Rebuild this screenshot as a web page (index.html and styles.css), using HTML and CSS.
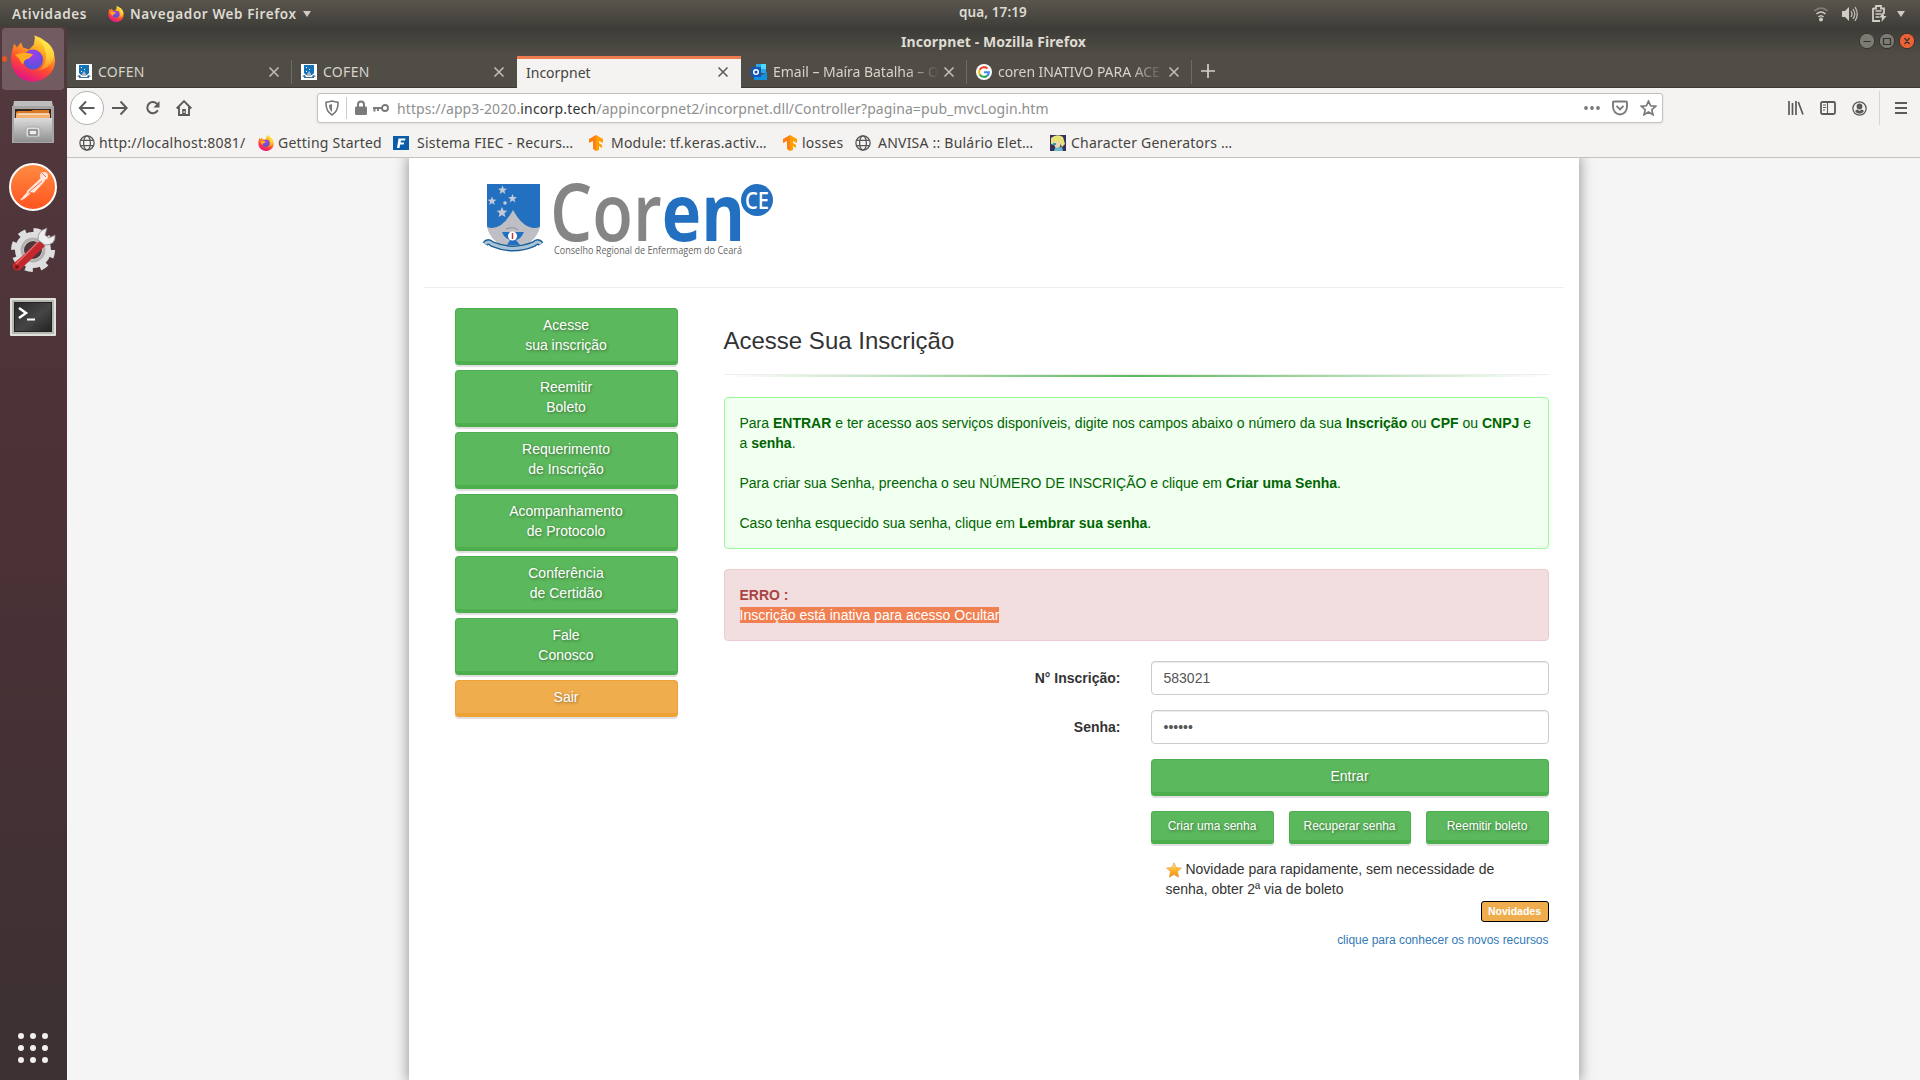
FILE: index.html
```html
<!DOCTYPE html>
<html lang="pt-BR">
<head>
<meta charset="utf-8">
<title>Incorpnet - Mozilla Firefox</title>
<link rel="stylesheet" href="styles.css">
</head>
<body>
<svg width="0" height="0" class="defs">
  <defs>
    <linearGradient id="ffBody" x1="0.8" y1="0" x2="0.35" y2="1"><stop offset="0" stop-color="#fff44f"/><stop offset=".35" stop-color="#ffa61e"/><stop offset=".65" stop-color="#ff4b2f"/><stop offset="1" stop-color="#e3108a"/></linearGradient>
    <radialGradient id="ffGlobe" cx=".5" cy=".3" r=".7"><stop offset="0" stop-color="#a63af0"/><stop offset="1" stop-color="#4a58d8"/></radialGradient>
    <linearGradient id="ffTail" x1="0" y1="0" x2="0" y2="1"><stop offset="0" stop-color="#fff44f"/><stop offset=".6" stop-color="#ffcf3a"/><stop offset="1" stop-color="#ff8a20"/></linearGradient>
    <linearGradient id="steel" x1="0" y1="0" x2="0" y2="1"><stop offset="0" stop-color="#dcdcdc"/><stop offset="1" stop-color="#909090"/></linearGradient>
    <linearGradient id="orange" x1="0" y1="0" x2="0" y2="1"><stop offset="0" stop-color="#ff8c42"/><stop offset="1" stop-color="#ff5320"/></linearGradient>
    <linearGradient id="screen" x1="0" y1="0" x2="1" y2="1"><stop offset="0" stop-color="#2a2a2a"/><stop offset=".55" stop-color="#454545"/><stop offset="1" stop-color="#222"/></linearGradient>
    <linearGradient id="starFill" x1="0" y1="0" x2="0" y2="1"><stop offset="0" stop-color="#fff0a0"/><stop offset=".5" stop-color="#fdb62a"/><stop offset="1" stop-color="#f58a0c"/></linearGradient>
    <symbol id="firefox" viewBox="0 0 46 46">
      <path d="M4 8 7 12 11 7 13 12 19 14 24 9 C24 5 26 2 24 0 C34 2 45 13 45 25 C45 37 35 46 23 46 C10 46 1 36 1 24 C1 17 3 13 4 8Z" fill="url(#ffBody)"/>
      <path d="M24 0 C31 5 34 9 35 15 C38 22 35 31 28 35 C41 32 45 24 44 17 C41 8 34 4 30 5 C28 3 27 1 24 0Z" fill="url(#ffTail)"/>
      <circle cx="23" cy="24" r="10" fill="url(#ffGlobe)"/>
      <path d="M5 20 C10 16 19 17 23 19 L19 23 C15 24 14 25 13 29 C10 27 10 22 5 20Z" fill="#ffac20"/>
    </symbol>
    <symbol id="cofen" viewBox="0 0 16 16">
      <path d="M0 0h16v16H0z" fill="#fff"/><path d="M3 1h10v8l-2 2H5L3 9z" fill="#1273b8"/><path d="M5 3h1v1H5zM8 5h1v1H8zM5 7h1v1H5z" fill="#fff"/><path d="M6 10 8 7l2 3v2H6z" fill="#a9b8c5"/><path d="M1 12l3-1 1 2h6l1-2 3 1-2 1v1H3v-1z" fill="#3b6e96"/>
    </symbol>
    <symbol id="globe" viewBox="0 0 16 16"><g fill="none" stroke="#575757" stroke-width="1.3"><circle cx="8" cy="8" r="7.1"/><ellipse cx="8" cy="8" rx="3.4" ry="7.1"/><path d="M1.5 5.3h13M1.5 10.7h13"/></g></symbol>
    <symbol id="tensor" viewBox="0 0 16 16"><path d="M8 0 15 4v4l-4-2v2l3 2v3l-3-2v4l-3 1z" fill="#ffa000"/><path d="M8 0 1 4v4l4-2v8l3 2z" fill="#ff7f10"/></symbol>
    <symbol id="close" viewBox="0 0 12 12"><path d="M1.5 1.5l9 9M10.5 1.5l-9 9" stroke="currentColor" stroke-width="1.5" fill="none"/></symbol>
  </defs>
</svg>

<header class="topbar">
  <span class="activities">Atividades</span>
  <svg class="app-icon" width="16" height="18"><use href="#firefox"/></svg>
  <span class="app-name">Navegador Web Firefox</span>
  <i class="caret"></i>
  <time class="clock">qua, 17:19</time>
  <div class="status">
    <svg width="14" height="16" viewBox="0 0 14 16" fill="none" stroke="#ccc9c2" stroke-width="1.6"><path d="M.5 5Q7-1 13.500 5" stroke="#85827a"/><path d="M2.500 8Q7 4 11.500 8M4.500 11Q7 8.500 9.500 11"/><circle cx="7" cy="13.500" r="1.200" fill="#ccc9c2"/></svg>
    <svg width="16" height="16" viewBox="0 0 16 16"><path d="M0 5h3l4-4v14l-4-4H0z" fill="#d0cdc6"/><path d="M9 5q2 3 0 6M11 3q3.500 5 0 10M13 1q4.500 7 0 14" fill="none" stroke="#bdbab2" stroke-width="1.300"/></svg>
    <svg width="15" height="17" viewBox="0 0 15 17"><path d="M1 3.500h3V1h5v2.500h3V9M8 16H1V3" fill="none" stroke="#d0cdc6" stroke-width="1.800"/><path d="M3.500 6h6M3.500 9h6M3.500 12h4" stroke="#d0cdc6" stroke-width="1.500"/><path d="M11 7 7.500 12.500H10L9.500 17 14.500 11H12z" fill="#d0cdc6"/></svg>
    <i class="caret"></i>
  </div>
</header>

<div class="desktop">
  <nav class="dock">
    <div class="dock-active"><i class="running"></i><svg width="46" height="47"><use href="#firefox"/></svg></div>
    <svg class="dock-files" width="44" height="45" viewBox="0 0 44 45"><path d="M3 1h38l2 12H1z" fill="#bdbdbd"/><path d="M1 6h42v37H1z" fill="#a5a5a5"/><path d="M4 9h36v9H4z" fill="#35251c"/><path d="M7 11h13l2-1h16v8H5v-6z" fill="#d9792a"/><path d="M5 13.500h34V18H5z" fill="#f5b070"/><path d="M7 14h31" stroke="#fff" /><path d="M3 18h38v24H3z" fill="url(#steel)"/><rect x="15" y="27" width="14" height="10" rx="2" fill="#ddd" stroke="#aaa"/><rect x="18" y="30" width="8" height="5" fill="#eee" stroke="#555"/></svg>
    <svg class="dock-postman" width="48" height="48" viewBox="0 0 48 48"><circle cx="24" cy="24" r="23" fill="url(#orange)" stroke="#fff" stroke-width="2"/><circle cx="35" cy="13" r="4" fill="#ffe6dc"/><path d="M32 16 35 18 25 29 19 28zM20 28 12 37M21 30 14 36" fill="#ffe6dc" stroke="#ffe6dc" stroke-width="1.500"/><path d="M20 29 33 18M33 10l4 4" stroke="#ff6c37"/></svg>
    <svg class="dock-tools" width="46" height="46" viewBox="0 0 46 46"><circle cx="22" cy="23" r="13.500" fill="none" stroke="#dedede" stroke-width="9"/><circle cx="22" cy="23" r="19.500" fill="none" stroke="#dedede" stroke-width="5" stroke-dasharray="7.650 7.650"/><circle cx="22" cy="23" r="11" fill="none" stroke="#b2b2b2" stroke-width="3"/><path d="M29 14 34 19 10 42Q6 45 3 42Q0 39 3 36z" fill="#c3282d"/><path d="M27 15 5 37" stroke="#e5686a" stroke-width="1.500"/><circle cx="6" cy="40" r="2" fill="#7e1216"/><path d="M27 13Q26 4 36 1L34 8l4 3 6-3Q45 18 34 18z" fill="#eee" stroke="#888" stroke-width=".8"/></svg>
    <svg class="dock-term" width="46" height="38" viewBox="0 0 46 38"><rect width="46" height="38" rx="1" fill="#e2e2dd"/><path d="M2 2h42v34H2z" fill="#b7b7b2"/><path d="M4 4h38v30H4z" fill="#222"/><path d="M5 5h36v28H5z" fill="url(#screen)"/><path d="M9 10l7 5-7 5" fill="none" stroke="#fff" stroke-width="2.500"/><path d="M17 21.500h8" stroke="#fff" stroke-width="2"/></svg>
    <div class="dock-apps"><i></i><i></i><i></i><i></i><i></i><i></i><i></i><i></i><i></i></div>
  </nav>

  <div class="window">
    <div class="titlebar">
      <b>Incorpnet - Mozilla Firefox</b>
      <div class="win-buttons">
        <svg width="56" height="18" viewBox="0 0 56 18"><g stroke="#33322e"><circle cx="8" cy="9" r="7.700" fill="#7c7a73"/><circle cx="28" cy="9" r="7.700" fill="#7c7a73"/><circle cx="48" cy="9" r="7.700" fill="#ec6237"/></g><path d="M4.500 9.500h7M24.500 6.500h7v6h-7zM45.500 6l5 6M50.500 6l-5 6" fill="none" stroke="#33322e" stroke-width="1.200"/></svg>
      </div>
    </div>

    <div class="tabs">
      <div class="tab"><svg width="16" height="16"><use href="#cofen"/></svg><span class="t-cofen">COFEN</span><svg class="x" width="12" height="12"><use href="#close"/></svg></div>
      <div class="tab no-sep"><svg width="16" height="16"><use href="#cofen"/></svg><span class="t-cofen">COFEN</span><svg class="x" width="12" height="12"><use href="#close"/></svg></div>
      <div class="tab active"><span class="t-inc">Incorpnet</span><svg class="x" width="12" height="12"><use href="#close"/></svg></div>
      <div class="tab"><svg width="16" height="16" viewBox="0 0 16 16"><path d="M5 0h10v9H5z" fill="#28a8ea"/><path d="M10 0h5v5h-5z" fill="#50d9ff"/><path d="M3 8l6 4 7-4v8H3z" fill="#1490df"/><path d="M0 3h10v10H0z" fill="#1354b8"/><circle cx="5" cy="8" r="2.300" fill="none" stroke="#fff" stroke-width="1.500"/></svg><span class="t-mail">Email – Maíra Batalha – O</span><svg class="x" width="12" height="12"><use href="#close"/></svg></div>
      <div class="tab"><svg width="16" height="16" viewBox="0 0 16 16"><circle cx="8" cy="8" r="8" fill="#fff"/><g fill="none" stroke-width="2.100"><path d="M11.500 4.600A4.900 4.900 0 0 0 3.700 5.700" stroke="#ea4335"/><path d="M3.700 5.700A4.900 4.900 0 0 0 3.800 10.500" stroke="#fbbc05"/><path d="M3.800 10.500A4.900 4.900 0 0 0 11.300 11.600" stroke="#34a853"/><path d="M11.300 11.600A4.900 4.900 0 0 0 12.900 8.200H8" stroke="#4285f4"/></g></svg><span class="t-google">coren INATIVO PARA ACE</span><svg class="x" width="12" height="12"><use href="#close"/></svg></div>
      <svg class="plus" width="14" height="14" viewBox="0 0 14 14"><path d="M7 0v14M0 7h14" stroke="#d3d0c8" stroke-width="1.700"/></svg>
    </div>

    <div class="toolbar">
      <svg class="back" width="36" height="36" viewBox="0 0 36 36"><circle cx="18" cy="18" r="16.500" fill="#fff" stroke="#b3b1af"/><path d="M11 18h14.500M17 11.500 10.800 18l6.200 6.500" fill="none" stroke="#5c5a58" stroke-width="1.900"/></svg>
      <svg class="fwd" width="16" height="16" viewBox="0 0 16 16" fill="none" stroke="#5c5a58" stroke-width="1.900"><path d="M0 8h14.500M8.500 1.500 14.700 8l-6.200 6.500"/></svg>
      <svg class="reload" width="16" height="16" viewBox="0 0 16 16"><path d="M12.300 4.200A5.600 5.600 0 1 0 12.800 10.300" fill="none" stroke="#5c5a58" stroke-width="2"/><path d="M14.500 1v6.500H8.500z" fill="#5c5a58"/></svg>
      <svg class="home" width="16" height="16" viewBox="0 0 16 16"><path d="M.7 8.500 8 1.200l7.300 7.300M3 7v8h10V7" fill="none" stroke="#5c5a58" stroke-width="1.900"/><path d="M6.200 9h3.600v6H6.200z" fill="#5c5a58"/><path d="M7.600 11h1v2h-1z" fill="#fff"/></svg>
      <div class="urlbar">
        <svg class="shield" width="14" height="16" viewBox="0 0 14 16"><path d="M7 1q3 1 6 1.300 .4 9-6 12.700-6.400-3.700-6-12.700Q4 2 7 1z" fill="none" stroke="#7a7a7a" stroke-width="1.600"/><path d="M7 4v8q-3-2.500-3-7z" fill="#7a7a7a"/></svg>
        <i class="url-sep"></i>
        <svg class="lock" width="12" height="16" viewBox="0 0 12 16"><path d="M3 8V4.500a3 3 0 0 1 6 0V8" fill="none" stroke="#7a7a7a" stroke-width="2"/><rect y="6.500" width="12" height="8.500" rx="1.200" fill="#7a7a7a"/></svg>
        <svg class="key" width="16" height="10" viewBox="0 0 16 10"><circle cx="12" cy="5" r="3" fill="none" stroke="#7a7a7a" stroke-width="1.900"/><path d="M0 5h9M1.500 5v3.500M5 5v3" stroke="#7a7a7a" stroke-width="2"/></svg>
        <span class="url">https://app3-2020.<span>incorp.tech</span>/appincorpnet2/incorpnet.dll/Controller?pagina=pub_mvcLogin.htm</span>
        <svg class="dots" width="16" height="4" viewBox="0 0 16 4" fill="#7a7a7a"><circle cx="2" cy="2" r="1.900"/><circle cx="8" cy="2" r="1.900"/><circle cx="14" cy="2" r="1.900"/></svg>
        <svg class="pocket" width="16" height="16" viewBox="0 0 16 16" fill="none" stroke="#7a7a7a" stroke-width="1.900"><path d="M2 1.500h12q1 0 1 1V7q-.5 6.500-7 7.500Q1.500 13.500 1 7V2.500q0-1 1-1z"/><path d="M4.500 5.800 8 9.300l3.500-3.500"/></svg>
        <svg class="fav" width="17" height="16" viewBox="0 0 17 16"><path d="M8.500 1l2.100 4.800 5 .5-3.800 3.400 1.200 5-4.500-2.600L4 14.700l1.200-5L1.400 6.300l5-.5z" fill="none" stroke="#7a7a7a" stroke-width="1.700"/></svg>
      </div>
      <svg class="library" width="16" height="14" viewBox="0 0 16 14"><path d="M1 0v14M4.500 2v12M8 0v14M10.300 1 15 13.500" stroke="#5c5a58" stroke-width="1.700"/></svg>
      <svg class="sidebar-icon" width="16" height="14" viewBox="0 0 16 14"><rect x="1" y="1" width="14" height="12" rx="1.500" fill="none" stroke="#5c5a58" stroke-width="1.800"/><path d="M7.500 1v12M3 4h3M3 6.500h3M3 9h2" stroke="#5c5a58" stroke-width="1.100"/></svg>
      <svg class="account" width="15" height="15" viewBox="0 0 15 15"><circle cx="7.500" cy="7.500" r="6.600" fill="none" stroke="#5c5a58" stroke-width="1.300"/><circle cx="7.500" cy="5.500" r="2.900" fill="#5c5a58"/><path d="M3 10q1-1.500 2.500-1.500l2 1.500 2-1.500Q11 8.500 12 10q-1.500 2.800-4.500 2.800T3 10z" fill="#5c5a58"/></svg>
      <i class="tool-sep"></i>
      <svg class="burger" width="12" height="12" viewBox="0 0 12 12"><path d="M0 1h12M0 6h12M0 11h12" stroke="#5c5a58" stroke-width="2"/></svg>
    </div>

    <div class="bookmarks">
      <div class="bm b1"><svg width="16" height="16"><use href="#globe"/></svg><span>http://localhost:8081/</span></div>
      <div class="bm b2"><svg width="16" height="16"><use href="#firefox"/></svg><span>Getting Started</span></div>
      <div class="bm b3"><svg width="16" height="14" viewBox="0 0 16 14"><path d="M0 0h16v14H0z" fill="#0b5ca8"/><path d="M5.500 2.500h7l-.5 2H8l-.4 2h3.600l-.5 2H7.200l-.7 3.500H4z" fill="#fff"/></svg><span>Sistema FIEC - Recurs…</span></div>
      <div class="bm b4"><svg width="16" height="16"><use href="#tensor"/></svg><span>Module: tf.keras.activ…</span></div>
      <div class="bm b5"><svg width="16" height="16"><use href="#tensor"/></svg><span>losses</span></div>
      <div class="bm b6"><svg width="16" height="16"><use href="#globe"/></svg><span>ANVISA :: Bulário Elet…</span></div>
      <div class="bm b7"><svg width="16" height="16" viewBox="0 0 16 16"><path d="M0 0h16v16H0z" fill="#38305c"/><path d="M1 3q6-5 12-1l2 7-3 3-2-4-6 2-3-1z" fill="#e8e27a"/><path d="M3 7h8l-1 5-4 2z" fill="#e9d6b4"/><path d="M3 8h3v2H3z" fill="#27a7b8"/><path d="M5 13l7-1 1 4H4z" fill="#67b9cf"/></svg><span>Character Generators …</span></div>
    </div>

    <main class="viewport">
      <div class="page">
        <header class="brand">
          <svg width="300" height="82" viewBox="0 0 300 82">
            <path d="M10 6h53v42q-6 18-27 20Q16 66 10 48z" fill="#2470c0"/>
            <path d="M10 49q14 5 26-17 12 22 27 17-4 17-27 23Q14 66 10 49z" fill="#bdbfc4"/>
            <g fill="#c5cbd6"><path id="st" d="M25.500 7.500l1.200 3 3.200.2-2.500 2 .9 3.200-2.800-1.800-2.800 1.800.9-3.200-2.500-2 3.200-.2z"/><use href="#st" x="-10.500" y="11"/><use href="#st" x="10" y="8.500"/><path d="M25 29l1.500 3.600 3.900.2-3 2.500 1 3.800-3.400-2-3.400 2 1-3.800-3-2.500 3.900-.2z"/><circle cx="28" cy="25" r="1.800"/></g>
            <path d="M25 54h22q-3 7-8 8l4 5H30l3-5q-6-2-8-8z" fill="#2470c0"/><circle cx="35.500" cy="58" r="4.500" fill="#fff"/><path d="M35.500 55v6" stroke="#c33" stroke-width="1.500"/><path d="M29 51q7-3 12 1" stroke="#8a8fa0" fill="none"/>
            <path d="M8 66q3-4 7 0 21 9 42 0 4-4 7 0" fill="none" stroke="#1d5f95" stroke-width="6"/><path d="M8 66q3-4 7 0 21 9 42 0 4-4 7 0" fill="none" stroke="#a9c4d8" stroke-width="3"/>
            <text class="logo-name" x="73" y="63" textLength="195" lengthAdjust="spacingAndGlyphs"><tspan fill="#858585">Cor</tspan><tspan class="logo-en">en</tspan></text>
            <circle cx="280" cy="22" r="16" fill="#2470c0"/>
            <text class="logo-ce" x="268" y="30.500" textLength="24" lengthAdjust="spacingAndGlyphs">CE</text>
            <text class="logo-sub" x="77" y="76" textLength="188" lengthAdjust="spacingAndGlyphs">Conselho Regional de Enfermagem do Ceará</text>
          </svg>
        </header>
        <div class="columns">
          <nav class="menu">
            <a class="btn">Acesse<br>sua inscrição</a>
            <a class="btn">Reemitir<br>Boleto</a>
            <a class="btn">Requerimento<br>de Inscrição</a>
            <a class="btn">Acompanhamento<br>de Protocolo</a>
            <a class="btn">Conferência<br>de Certidão</a>
            <a class="btn">Fale<br>Conosco</a>
            <a class="btn warn">Sair</a>
          </nav>
          <section class="content">
            <h3>Acesse Sua Inscrição</h3>
            <div class="rule"></div>
            <div class="alert info">Para <b>ENTRAR</b> e ter acesso aos serviços disponíveis, digite nos campos abaixo o número da sua <b>Inscrição</b> ou <b>CPF</b> ou <b>CNPJ</b> e a <b>senha</b>.<br><br>Para criar sua Senha, preencha o seu NÚMERO DE INSCRIÇÃO e clique em <b>Criar uma Senha</b>.<br><br>Caso tenha esquecido sua senha, clique em <b>Lembrar sua senha</b>.</div>
            <div class="alert error"><b>ERRO :</b><br><mark>Inscrição está inativa para acesso Ocultar</mark></div>
            <form class="login">
              <label>N° Inscrição:</label><div class="field">583021</div>
              <label>Senha:</label><div class="field">••••••</div>
              <div class="actions">
                <a class="btn">Entrar</a>
                <div class="small-row"><a class="btn sm">Criar uma senha</a><a class="btn sm">Recuperar senha</a><a class="btn sm">Reemitir boleto</a></div>
                <p class="news"><svg width="16" height="16" viewBox="0 0 16 16"><path d="M8 .8l2.200 4.700 5.200.6-3.900 3.500 1.100 5.600L8 12.600l-4.600 2.600 1.100-5.600L.6 6.100l5.200-.6z" fill="url(#starFill)" stroke="#dfa050" stroke-width=".7"/></svg> Novidade para rapidamente, sem necessidade de senha, obter 2ª via de boleto</p>
                <span class="badge">Novidades</span>
                <a class="more">clique para conhecer os novos recursos</a>
              </div>
            </form>
          </section>
        </div>
      </div>
    </main>
  </div>
</div>
</body>
</html>
```
FILE: styles.css
```css
* { box-sizing: border-box; }
html, body { height: 100%; }
body { margin: 0; overflow: hidden; display: flex; flex-direction: column; font-family: "Noto Sans", sans-serif; font-size: 14px; color: #4c4c4c; }
svg { display: block; flex: none; }
.defs { position: absolute; }

/* system bar */
.topbar { height: 27px; flex: none; display: grid; grid-template-columns: 96px 22px 173px auto 1fr auto 1fr; align-items: center; padding: 0 15px 0 12px; background: linear-gradient(#5a564e, #3f3e39); color: #dfdbd2; font-weight: 600; font-size: 13.5px; position: relative; white-space: nowrap; }
.activities { letter-spacing: .6px; }
.app-name { letter-spacing: .6px; }
.caret { width: 0; height: 0; border: 4.5px solid transparent; border-top: 6px solid #cfccc4; border-bottom: 0; }
.clock { position: absolute; left: 959px; top: 3px; letter-spacing: .1px; }
.status { grid-column: 7; justify-self: end; display: flex; align-items: center; gap: 14px; }
.status .caret { margin-left: -4px; }

.desktop { flex: 1; display: flex; min-height: 0; }
.dock { width: 67px; flex: none; display: flex; flex-direction: column; background: linear-gradient(#52393e, #4c3237 45%, #3e3033 90%, #3d3133); padding-top: 1px; }
.dock-active { position: relative; width: 62px; height: 62px; margin-left: 2px; padding: 7px 8px; border-radius: 4px; background: #735c61; }
.running { position: absolute; left: 0; top: 28px; width: 5px; height: 6px; border-radius: 50%; background: #e95420; }
.dock-files { margin: 10px 0 0 11px; }
.dock-postman { margin: 18px 0 0 9px; }
.dock-tools { margin: 16px 0 0 11px; }
.dock-term { margin: 25px 0 0 10px; }
.dock-apps { margin: auto 0 17px 18px; display: grid; grid-template-columns: repeat(3, 6px); gap: 6px; }
.dock-apps i { width: 6px; height: 6px; border-radius: 50%; background: #f2f0ee; }

.window { flex: 1; min-width: 0; display: flex; flex-direction: column; background: #f4f3f1; }
.titlebar { height: 28px; flex: none; display: grid; grid-template-columns: 1fr auto 1fr; align-items: center; background: linear-gradient(#3c3b37, #504d46); color: #dfdbd2; font-size: 14px; letter-spacing: .1px; }
.titlebar b { grid-column: 2; font-weight: 700; }
.win-buttons { justify-self: end; margin-right: 5px; }

.tabs { height: 33px; flex: none; display: flex; background: #504d46; border-bottom: 1px solid #3a3935; color: #d7d3ca; }
.tab { width: 225px; height: 32px; display: flex; align-items: center; padding: 2px 12px 0 9px; position: relative; }
.tab::after { content: ""; position: absolute; right: 0; top: 5px; width: 1px; height: 24px; background: #6e6b64; }
.tab.no-sep::after, .tab.active::after { display: none; }
.tab span { flex: 1; margin: -2px 4px 0 6px; overflow: hidden; white-space: nowrap; }
.t-cofen { letter-spacing: .3px; }
.tab.active { width: 224px; height: 32px; margin: 1px 1px 0 0; background: #f4f3f1; color: #45443f; border-top: 3px solid #f07c50; padding-top: 0; }
.tab.active span { margin: -3px 4px 0 0; }
.active .x { margin-top: -3px; }
.x { color: #c3c0b8; }
.active .x { color: #5a5955; }
.t-mail, .t-google { -webkit-mask-image: linear-gradient(90deg, #000 80%, transparent); mask-image: linear-gradient(90deg, #000 80%, transparent); }
.t-mail { letter-spacing: -.03px; }
.t-google { letter-spacing: -.05px; }
.plus { margin: 9px 0 0 9px; }

.toolbar { height: 40px; flex: none; display: flex; align-items: center; }
.back { margin-left: 2px; }
.fwd { margin-left: 7px; }
.reload { margin-left: 17px; }
.home { margin-left: 15px; }
.urlbar { width: 1346px; height: 30px; margin-left: 125px; display: flex; align-items: center; padding: 0 5px 0 7px; background: #fff; border: 1px solid #c3c1be; border-radius: 3px; box-shadow: 0 1px 3px rgba(0, 0, 0, .08); }
.url-sep { width: 1px; height: 22px; margin: 0 8px 0 7px; background: #cfcdca; }
.key { margin: 0 8px 0 6px; }
.url { flex: 1; color: #8f8f8f; white-space: nowrap; letter-spacing: .09px; }
.url span { color: #333; letter-spacing: .2px; }
.pocket { margin: 0 12px; }
.library { margin-left: 125px; }
.sidebar-icon { margin-left: 16px; }
.account { margin-left: 16px; }
.tool-sep { width: 1px; height: 34px; margin: 0 15px 0 12px; background: #d6d4d1; }

.bookmarks { height: 30px; flex: none; display: flex; align-items: center; padding-left: 12px; border-bottom: 1px solid #c4c3c1; color: #45443f; }
.bm { display: flex; align-items: center; gap: 4px; white-space: nowrap; letter-spacing: .22px; }
.b1 { width: 179px; }
.b2 { width: 135px; }
.b3 { width: 195px; gap: 8px; }
.b4 { width: 194px; gap: 7px; }
.b5 { width: 73px; }
.b6 { width: 195px; gap: 7px; }
.b7 { gap: 5px; }

/* web page */
.viewport { flex: 1; min-height: 0; overflow: hidden; background: #f5f5f5; font: 14px/20px "Liberation Sans", Arial, sans-serif; color: #333; display: flex; }
.page { width: 1170px; margin-left: 342px; padding: 0 15px; background: #fff; box-shadow: 0 0 12px 2px rgba(0, 0, 0, .35); }
.brand { height: 130px; padding: 20px 0 0 53px; border-bottom: 1px solid #eee; }
.logo-name { font: 600 79px "Open Sans", "Noto Sans", sans-serif; }
.logo-en { fill: #2470c0; font-weight: 700; }
.logo-ce { font: 500 23px "Noto Sans", sans-serif; fill: #fff; }
.logo-sub { font: 10.500px "Open Sans", "Noto Sans", sans-serif; fill: #666; }
.columns { display: flex; padding: 20px 15px 0 30.5px; }
.menu { width: 223px; display: flex; flex-direction: column; gap: 5px; }
.btn { display: block; padding: 6px 12px; text-align: center; color: #fff; background: #5cb85c; border: 1px solid #4cae4c; border-bottom-width: 4px; border-radius: 4px; text-shadow: 1px 1px 3px rgba(0, 0, 0, .4); box-shadow: 0 2px 1px rgba(0, 0, 0, .13); }
.warn { background: #f0ad4e; border-color: #eea236; }
.content { width: 825px; margin-left: 46px; }
h3 { margin: 20px 0 0; font-size: 24px; font-weight: 500; line-height: 26px; }
.rule { height: 3px; margin: 20px 0; border-top: 1px solid #eee; background: linear-gradient(90deg, transparent, #5cb85c, transparent); }
.alert { padding: 15px; border: 1px solid; border-radius: 4px; margin-bottom: 20px; }
.info { color: #006400; background: #f0fff0; border-color: #98fb98; }
.error { color: #a94442; background: #f2dede; border-color: #ebccd1; }
mark { color: #fff; background: #f07f52; }
.login { display: grid; grid-template-columns: 397px 398px; gap: 15px 30px; }
label { font-weight: 700; text-align: right; padding-top: 7px; }
.field { height: 34px; padding: 6px 12px; border: 1px solid #ccc; border-radius: 4px; color: #555; box-shadow: inset 0 1px 1px rgba(0, 0, 0, .075); }
.actions { grid-column: 2; display: flex; flex-direction: column; }
.small-row { display: grid; grid-template-columns: 123px 122px 123px; gap: 15px; margin-top: 15px; }
.sm { padding: 5px 0; font-size: 12px; line-height: 18px; border-radius: 3px; }
.news { margin: 15px 15px 0; }
.news svg { display: inline-block; vertical-align: -4px; }
.badge { align-self: flex-end; width: 68px; height: 21px; margin-top: 2px; padding: 2px 0; text-align: center; font-size: 10.5px; line-height: 14px; font-weight: 700; color: #fff; background: #f0ad4e; border: 1px solid #000; border-radius: 3px; }
.more { align-self: flex-end; margin-top: 8px; font-size: 12px; letter-spacing: -.02px; color: #337ab7; }
```
